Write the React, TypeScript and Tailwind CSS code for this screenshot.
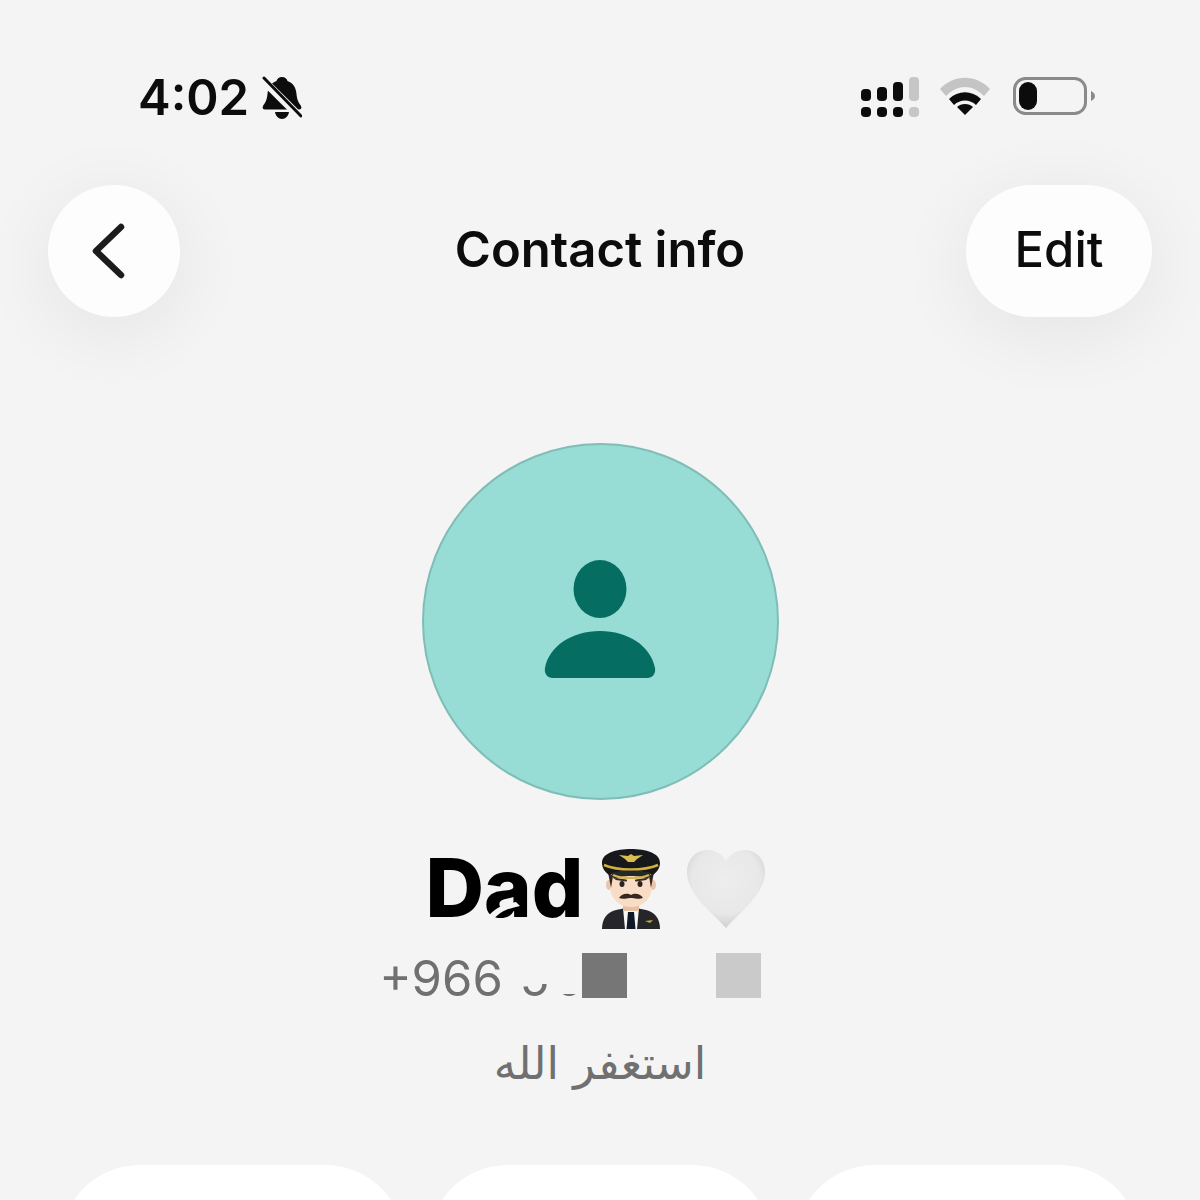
import React from "react";

function SilentBell() {
  return (
    <svg width="40" height="44" viewBox="0 0 40 44" className="ml-[13px]">
      <path d="M20 1c3 0 5 2 5.500 4 6 2 8.500 7 9 13 .4 6 2.500 9 4.500 12 1 2 0 3.500-2 3.500H3c-2 0-3-1.500-2-3.500 2-3 4-6 4.500-12 .5-6 3-11 9-13C15 3 17 1 20 1z" fill="#0c0c0c" />
      <path d="M13 36h14c-.6 4-3.500 7-7 7s-6.400-3-7-7z" fill="#0c0c0c" />
      <path d="M2 5l36 36" stroke="#f4f4f4" strokeWidth="8" />
      <path d="M2 2l37 38" stroke="#0c0c0c" strokeWidth="3" strokeLinecap="round" />
    </svg>
  );
}

function Signal() {
  return (
    <svg width="58" height="41" viewBox="0 0 58 41">
      <rect x="0" y="12" width="10" height="12" rx="4" fill="#0c0c0c" />
      <rect x="16" y="10" width="10" height="14" rx="4" fill="#0c0c0c" />
      <rect x="32" y="5" width="10" height="19" rx="4" fill="#0c0c0c" />
      <rect x="48" y="0" width="10" height="24" rx="4" fill="#c6c6c6" />
      <rect x="0" y="30" width="10" height="10" rx="4" fill="#0c0c0c" />
      <rect x="16" y="30" width="10" height="10" rx="4" fill="#0c0c0c" />
      <rect x="32" y="30" width="10" height="10" rx="4" fill="#0c0c0c" />
      <rect x="48" y="30" width="10" height="10" rx="4" fill="#c6c6c6" />
    </svg>
  );
}

function Wifi() {
  return (
    <svg width="50" height="38" viewBox="0 0 50 38">
      <path d="M0 12C14-3 36-3 50 12l-6 7C32 7 18 7 6 19z" fill="#c4c4c4" />
      <path d="M9 22c9-9 23-9 32 0l-5 6c-6-6-16-6-22 0z" fill="#0c0c0c" />
      <path d="M17 30c4-4 12-4 16 0l-8 8z" fill="#0c0c0c" />
    </svg>
  );
}

function Battery() {
  return (
    <svg width="82" height="38" viewBox="0 0 82 38">
      <rect x="1.500" y="1.500" width="71" height="35" rx="11" fill="none" stroke="#8a8a8a" strokeWidth="3" />
      <rect x="6" y="5" width="18" height="28" rx="9" fill="#0c0c0c" />
      <path d="M78 14c2.500 1 4 3 4 5s-1.500 4-4 5z" fill="#8a8a8a" />
    </svg>
  );
}

function PilotEmoji() {
  return (
    <svg width="60" height="82" viewBox="0 0 60 82">
      <path d="M1 81c0-10 5-17 14-19l15-3 15 3c9 2 14 9 14 19z" fill="#26262a" />
      <path d="M22 60h16l-2 21H24z" fill="#f7f7f7" />
      <path d="M27 64h6l1.500 17h-9z" fill="#101828" />
      <path d="M44 73l8-1-3 3z" fill="#c9a93a" />
      <rect x="22" y="50" width="16" height="13" fill="#e6c0a4" />
      <ellipse cx="8" cy="37" rx="3" ry="5" fill="#eac5aa" />
      <ellipse cx="52" cy="37" rx="3" ry="5" fill="#eac5aa" />
      <path d="M9 24h42v14c0 13-10 21-21 21S9 51 9 38z" fill="#f8dcc6" />
      <path d="M7 24l3 16 2-12zM53 24l-3 16-2-12z" fill="#33261f" />
      <ellipse cx="21" cy="36" rx="2.500" ry="3" fill="#2b211d" />
      <ellipse cx="39" cy="36" rx="2.500" ry="3" fill="#2b211d" />
      <path d="M15 31l10 1.500M35 32.500l10-1.500" stroke="#3a2b24" strokeWidth="2" strokeLinecap="round" />
      <path d="M18 50c3-5 9-5 12-3 3-2 9-2 12 3-5 2-8-.5-12 0-4-.5-7 2-12 0z" fill="#35261f" />
      <path d="M1 15C1 5 15 1 30 1s29 4 29 14c0 5-3 9-7 12-6-3-14-4-22-4S14 24 8 27c-4-3-7-7-7-12z" fill="#17181c" />
      <path d="M3 17c14 6 40 6 54 0" stroke="#cfb13c" strokeWidth="2.500" fill="none" />
      <path d="M10 25c8-3 32-3 40 0l-3 6c-6-4-28-4-34 0z" fill="#26272b" />
      <path d="M12 27c8 4 28 4 36 0" stroke="#d4b94a" strokeWidth="2" fill="none" />
      <path d="M18 7l9 1 3-2 3 2 9-1-6 4-3 3h-6l-3-3z" fill="#d9bd4f" />
    </svg>
  );
}

function WhiteHeart() {
  return (
    <svg width="82" height="80" viewBox="0 0 82 80">
      <defs>
        <radialGradient id="heartFill" cx="50%" cy="38%" r="62%">
          <stop offset="0%" stopColor="#ededed" />
          <stop offset="70%" stopColor="#e8e8e8" />
          <stop offset="100%" stopColor="#cfcfcf" />
        </radialGradient>
      </defs>
      <path d="M41 79C28 64 2 46 2 23 2 10 11 1 23 1c8 0 14 4 18 11C45 5 51 1 59 1c12 0 21 9 21 22 0 23-26 41-39 56z" fill="url(#heartFill)" />
    </svg>
  );
}

function Card() {
  return <div className="h-[140px] rounded-t-[80px] bg-white" />;
}

export default function App() {
  return (
    <div className="h-[1200px] overflow-hidden bg-[#f4f4f4] font-['Inter',sans-serif] text-[#0c0c0c]">
      <div className="flex h-[185px] items-start justify-between pr-[105px] pl-[138px] pt-[69px]">
        <div className="flex items-center">
          <span className="text-[49px] leading-[58px] font-semibold">4:02</span>
          <SilentBell />
        </div>
        <div className="flex items-start gap-[21px] pt-[8px]">
          <Signal />
          <div className="flex items-start gap-[23px]">
            <Wifi />
            <Battery />
          </div>
        </div>
      </div>

      <div className="grid grid-cols-[1fr_auto_1fr] items-center px-[48px]">
        <button className="flex h-[132px] w-[132px] items-center justify-center rounded-full bg-[#fdfdfd] shadow-[0_14px_80px_rgba(0,0,0,0.07)]">
          <svg width="44" height="60" viewBox="0 0 44 60" className="mr-[9px]">
            <path d="M33 6L8 30l25 24" fill="none" stroke="#1c1c1c" strokeWidth="6.500" strokeLinecap="round" strokeLinejoin="round" />
          </svg>
        </button>
        <h1 className="mb-[3px] text-[49px] leading-[56px] font-semibold">Contact info</h1>
        <button className="h-[132px] w-[186px] justify-self-end rounded-full bg-[#fdfdfd] pb-[3px] text-[49px] font-medium shadow-[0_14px_80px_rgba(0,0,0,0.07)]">
          Edit
        </button>
      </div>

      <div className="mt-[126px] flex flex-col items-center">
        <div className="flex h-[357px] w-[357px] items-center justify-center rounded-full border-2 border-[#7fbdb6] bg-[#98ddd5]">
          <svg width="112" height="120" viewBox="0 0 112 120" className="mt-[-4px]">
            <ellipse cx="56" cy="29" rx="26.500" ry="29" fill="#056d62" />
            <path d="M1 108C5 86 28 71 56 71s51 15 55 37c1 5-2 10-8 10H9c-6 0-9-5-8-10z" fill="#056d62" />
          </svg>
        </div>

        <div className="mt-[48px] mr-[7px] flex h-[82px] items-center">
          <div className="relative pb-[3px]">
            <span className="text-[81px] leading-[80px] font-extrabold text-black">Dad</span>
            <svg width="36" height="18" viewBox="0 0 36 18" className="absolute bottom-[12px] left-[60px]">
              <path d="M1 17C7 8 17 3 30 1l4 4C24 7 14 10 8 18z" fill="#f4f4f4" />
            </svg>
          </div>
          <div className="ml-[18px]">
            <PilotEmoji />
          </div>
          <div className="ml-[24px]">
            <WhiteHeart />
          </div>
        </div>

        <div className="mt-[22px] mr-[60px] flex h-[46px] items-center text-[49px] leading-[46px] text-[#707070]">
          <span className="mt-[7px]">+966</span>
          <div className="relative mt-[7px] ml-[17px] w-[28px]">
            <span>5</span>
            <div className="absolute inset-x-0 top-0 h-[28px] bg-[#f4f4f4]" />
          </div>
          <div className="relative mt-[7px] ml-[6px] w-[28px]">
            <span>0</span>
            <div className="absolute inset-x-0 top-0 h-[38px] bg-[#f4f4f4]" />
          </div>
          <div className="h-[45px] w-[45px] bg-[#767676]" />
          <div className="ml-[89px] h-[45px] w-[45px] bg-[#cacaca]" />
        </div>

        <p dir="rtl" className="mt-[36px] font-['DejaVu_Sans',sans-serif] text-[45px] leading-[60px] text-[#707070]">
          استغفر الله
        </p>
      </div>

      <div className="mt-[71px] grid grid-cols-3 gap-[23px] px-[60px]">
        <Card />
        <Card />
        <Card />
      </div>
    </div>
  );
}
